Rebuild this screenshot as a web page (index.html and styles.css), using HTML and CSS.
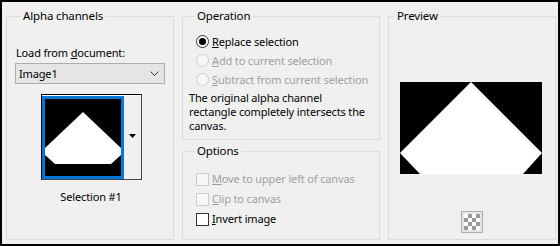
FILE: index.html
```html
<!DOCTYPE html>
<html>
<head>
<meta charset="utf-8">
<link rel="stylesheet" href="styles.css">
</head>
<body>
<div class="dialog">
  <fieldset class="group g-alpha">
    <legend>Alpha channels</legend>
    <div class="label">Load from <u>d</u>ocument:</div>
    <div class="combo"><span>Image1</span>
      <svg class="chev" width="9" height="5" viewBox="0 0 9 5"><path d="M0.5 0.5 L4.5 4.5 L8.5 0.5" fill="none" stroke="#333" stroke-width="1"/></svg>
    </div>
    <div class="thumbwrap">
      <div class="thumb">
        <div class="thumb-sel">
          <svg width="76" height="77" viewBox="0 0 76 77"><rect width="76" height="77" fill="#000"/><polygon points="38,13 0,49 0,56 10,65 66,65 76,56 76,49" fill="#fff"/></svg>
        </div>
        <div class="thumb-drop"><svg width="7" height="4" viewBox="0 0 7 4"><polygon points="0,0 7,0 3.5,4" fill="#000"/></svg></div>
      </div>
    </div>
    <div class="caption">Selection #1</div>
  </fieldset>

  <div class="mid">
    <fieldset class="group g-op">
      <legend>Operation</legend>
      <div class="row"><span class="radio on"></span><span><u>R</u>eplace selection</span></div>
      <div class="row dis"><span class="radio"></span><span><u>A</u>dd to current selection</span></div>
      <div class="row dis"><span class="radio"></span><span><u>S</u>ubtract from current selection</span></div>
      <p class="desc">The original alpha channel<br>rectangle completely intersects the<br>canvas.</p>
    </fieldset>
    <fieldset class="group g-opts">
      <legend>Options</legend>
      <div class="row crow dis first"><span class="check"></span><span><u>M</u>ove to upper left of canvas</span></div>
      <div class="row crow dis"><span class="check"></span><span><u>C</u>lip to canvas</span></div>
      <div class="row crow"><span class="check on"></span><span><u>I</u>nvert image</span></div>
    </fieldset>
  </div>

  <fieldset class="group g-prev">
    <legend>Preview</legend>
    <div class="prev-img">
      <svg width="142" height="92" viewBox="0 0 142 92"><rect width="142" height="92" fill="#000"/><polygon points="71,0 0,71 20,92 123,92 142,71" fill="#fff"/></svg>
    </div>
    <div class="checker-btn"><span class="checker"></span></div>
  </fieldset>
</div>
</body>
</html>
```
FILE: styles.css
```css
* { box-sizing: border-box; }
html, body { margin: 0; padding: 0; }
body {
  font-family: "Noto Sans", "Open Sans", sans-serif;
  font-size: 11px;
  letter-spacing: -0.15px;
  color: #000;
  background: #f0f0f0;
}
.dialog {
  width: 560px;
  height: 246px;
  border: 2px solid #000;
  background: #f0f0f0;
  display: flex;
  gap: 8px;
  padding: 6px 2px 4px 4px;
}
.group {
  margin: 0;
  border: 1px solid #dcdcdc;
  padding: 0;
  min-width: 0;
  line-height: 16px;
}
.group legend {
  margin-left: 5px;
  padding: 0 3px;
  line-height: 16px;
  font-size: 11.5px;
}
u { text-decoration: underline; text-underline-offset: 1px; }

/* left group */
.g-alpha {
  width: 168px;
  padding: 0 8px;
  display: flex;
  flex-direction: column;
}
.label { margin-top: 21px; padding-left: 1px; }
.combo {
  margin-top: 2px;
  height: 21px;
  border: 1px solid #adadad;
  background: #e5e5e5;
  display: flex;
  align-items: center;
  justify-content: space-between;
  padding: 0 5px 0 3px;
}
.thumbwrap { display: flex; justify-content: center; margin-top: 10px; padding-left: 2px; }
.thumb {
  width: 101px;
  height: 86px;
  border: 1px solid #000;
  border-right-color: #444;
  border-bottom-color: #444;
  padding-top: 1px;
  display: flex;
  background: #f8f8f8;
}
.thumb-sel {
  width: 82px;
  height: 83px;
  border: 3px solid #0078d7;
  display: flex;
}
.thumb-sel svg { display: block; }
.thumb-drop {
  flex: 1;
  display: flex;
  align-items: center;
  justify-content: center;
  background: #f0f0f0;
  padding-bottom: 4px;
}
.caption { text-align: center; margin-top: 9px; padding-left: 2px; }

/* middle */
.mid {
  width: 198px;
  display: flex;
  flex-direction: column;
  gap: 3px;
}
.g-op { height: 132px; padding: 0 6px; }
.g-opts { flex: 1; padding: 0 6px; }
.row {
  height: 19px;
  display: flex;
  align-items: center;
  gap: 3px;
  padding-left: 7px;
  white-space: nowrap;
}
.g-op .row:first-of-type { margin-top: 8px; }
.dis { color: #a0a0a0; }
.radio {
  width: 13px;
  height: 13px;
  border-radius: 50%;
  border: 1px solid #cccccc;
  background: #f7f7f7;
  flex: none;
  display: flex;
  align-items: center;
  justify-content: center;
}
.radio.on { border-color: #333; background: #fff; }
.radio.on::after {
  content: "";
  width: 7px;
  height: 7px;
  border-radius: 50%;
  background: #000;
}
.desc { margin: 2px 0 0 0; line-height: 14px; white-space: nowrap; }
.crow { height: 20px; }
.crow.first { margin-top: 10px; }
.check {
  width: 13px;
  height: 13px;
  border: 1px solid #cccccc;
  background: #f7f7f7;
  flex: none;
}
.check.on { border-color: #333; background: #fff; }

/* preview */
.g-prev {
  width: 168px;
  display: flex;
  flex-direction: column;
  align-items: center;
}
.prev-img { margin-top: 58px; margin-right: 3px; }
.prev-img svg { display: block; }
.checker-btn {
  margin-top: 37px;
  width: 22px;
  height: 22px;
  border: 1px solid #adadad;
  background: #e5e5e5;
  display: flex;
  align-items: center;
  justify-content: center;
}
.checker {
  width: 16px;
  height: 16px;
  background: repeating-conic-gradient(#9a9a9a 0 25%, #ffffff 0 50%) 0 0 / 8px 8px;
}
```
